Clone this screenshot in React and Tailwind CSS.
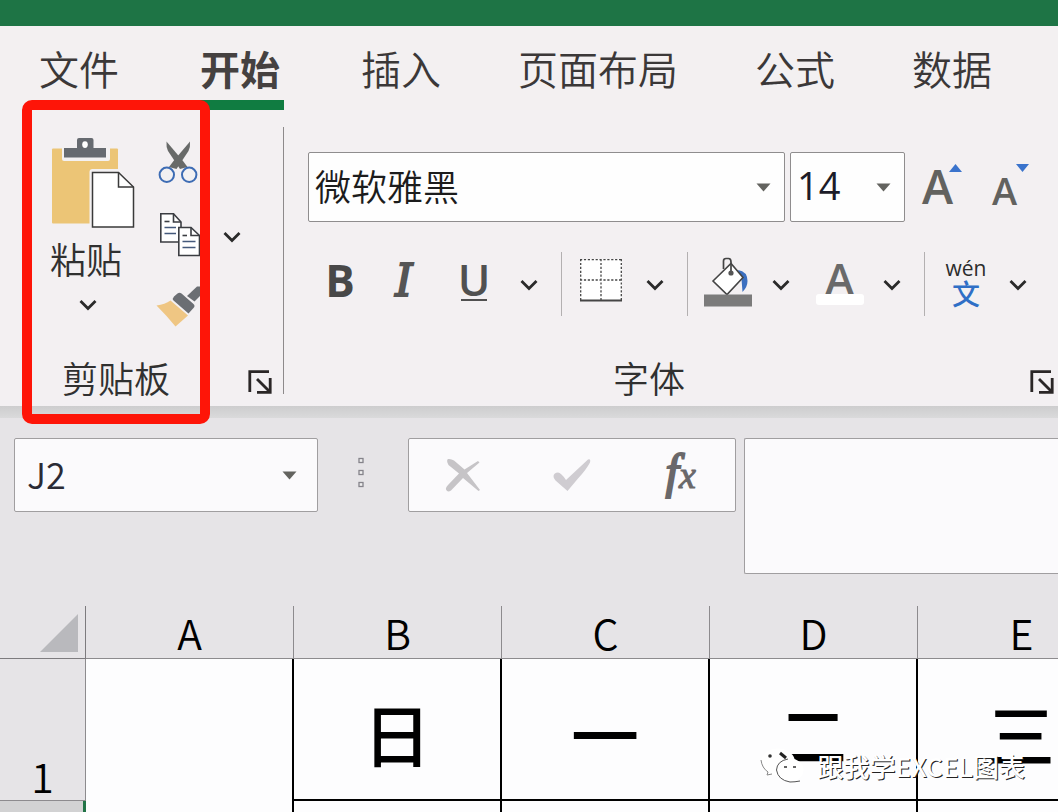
const TABS = ["文件", "开始", "插入", "页面布局", "公式", "数据"];

const COLUMNS = [
  { name: "A", day: "" },
  { name: "B", day: "日" },
  { name: "C", day: "一" },
  { name: "D", day: "二" },
  { name: "E", day: "三" },
];

function Chevron() {
  return (
    <svg width="18" height="12" viewBox="0 0 18 12" fill="none" stroke="#2a2a2a" strokeWidth="2.8" aria-hidden="true">
      <path d="M1.5 2 L9 9.5 L16.5 2" />
    </svg>
  );
}

function ChevronButton({ label }) {
  return (
    <button type="button" aria-label={label} className="flex h-16 w-[34px] items-center justify-center pt-0.5">
      <Chevron />
    </button>
  );
}

function Separator() {
  return (
    <div className="flex h-16 w-[30px] justify-center">
      <div className="w-px bg-[#b3b0b1]" />
    </div>
  );
}

function DropArrow() {
  return (
    <svg width="15" height="9" viewBox="0 0 15 9" aria-hidden="true">
      <path d="M0.5 0.5 H14.5 L7.5 8.5 Z" fill="#63635f" />
    </svg>
  );
}

function Launcher({ label }) {
  return (
    <button type="button" aria-label={label} className="shrink-0">
      <svg width="24" height="24" viewBox="0 0 24 24" fill="none" stroke="#2a2626" strokeWidth="2.8" aria-hidden="true">
        <path d="M1.8 22 V1.6 H21" />
        <path d="M9 9 L21.5 21.5" />
        <path d="M22.2 8 V22.3 H9" />
      </svg>
    </button>
  );
}

function PasteIcon() {
  return (
    <svg width="86" height="92" viewBox="0 0 86 92" aria-hidden="true">
      <rect x="2" y="10.5" width="66" height="75" rx="1" fill="#ecc576" />
      <path d="M12 9 H60 V21 Q60 23 58 23 H14 Q12 23 12 21 Z" fill="#f3f1f2" />
      <path d="M14 10 H27 V2 Q27 0 29 0 H41.5 Q43.5 0 43.5 2 V10 H56 V19.5 H14 Z" fill="#666a70" />
      <ellipse cx="35" cy="6.6" rx="2.8" ry="3.4" fill="#fff" />
      <path d="M39.500 86 V34 Q39.500 31 42.500 31 H72 V86 Z" fill="#f3f1f2" />
      <path d="M42.500 34.500 H68.500 L83.500 49 V89 H42.500 Z" fill="#fff" stroke="#3a3a3a" strokeWidth="1.500" />
      <path d="M68.500 34.500 V49 H83.500" fill="none" stroke="#3a3a3a" strokeWidth="1.500" />
    </svg>
  );
}

function CutIcon() {
  return (
    <svg width="46" height="46" viewBox="0 0 46 46" aria-hidden="true">
      <path d="M10.500 1.500 Q10 7 12 11 L24 29 L31.500 27 L27 21 Z" fill="#686a69" />
      <path d="M34 1.500 Q34.500 7 32.500 11 L20.500 29 L13 27 L17.500 21 Z" fill="#686a69" />
      <circle cx="10.800" cy="34.800" r="7.200" fill="#f3f1f2" stroke="#3d6cb4" strokeWidth="2" />
      <circle cx="33.200" cy="34.800" r="7.200" fill="#f3f1f2" stroke="#3d6cb4" strokeWidth="2" />
    </svg>
  );
}

function CopyIcon() {
  return (
    <svg width="46" height="46" viewBox="0 0 46 46" fill="none" stroke="#3b3d42" strokeWidth="1.600" aria-hidden="true">
      <path d="M4.800 1.800 H17.500 L25 10 V30 H4.800 Z" fill="#fff" />
      <path d="M17.500 1.800 V10 H25" />
      <path d="M8.500 9.500 H13.500" />
      <path d="M8.500 15.500 H20 M8.500 21.500 H20" stroke="#44597b" />
      <path d="M22.800 15.500 H35 L43.500 23.500 V43.500 H22.800 Z" fill="#fff" />
      <path d="M35 15.500 V23.500 H43.500" />
      <path d="M26.500 23.500 H31" />
      <path d="M26.500 29.500 H39.500 M26.500 35.500 H39.500" stroke="#44597b" />
    </svg>
  );
}

function BrushIcon() {
  return (
    <svg width="46" height="46" viewBox="0 0 46 46" aria-hidden="true">
      <path d="M0.500 21.500 Q9 20.500 14.500 16.500 L32 31.500 L19.500 42.500 Q11 32 0.500 21.500 Z" fill="#efc683" />
      <path d="M18 12.500 L21.500 9.500 Q23.500 8 25.500 9.500 L37.500 20 Q39.500 22 37.500 24 L32.500 29.500 L17.500 16.500 Q16 14.500 18 12.500 Z" fill="#6b6e73" />
      <path d="M31 12 L41 2.500 L46 2.500 V10 L38.500 17.500 Z" fill="#6b6e73" />
    </svg>
  );
}

function BorderIcon() {
  return (
    <svg width="44" height="44" viewBox="0 0 44 44" fill="none" stroke="#454545" strokeWidth="1.300" aria-hidden="true">
      <rect x="1" y="1" width="42" height="42" fill="#fff" stroke="none" />
      <path d="M1 1.700 H43 M1 22 H43 M1.700 1 V42 M22 1 V42 M42.300 1 V42" strokeDasharray="2.200 1.700" />
      <path d="M1 42.500 H43" strokeWidth="2" />
    </svg>
  );
}

function FillIcon() {
  return (
    <svg width="48" height="50" viewBox="0 0 48 50" aria-hidden="true">
      <path d="M34 13 Q43.500 14.500 43.500 24 Q43.500 30 38.500 35 L37.500 22 Z" fill="#3b6fc0" />
      <path d="M9 24 L27 6.500 L39 20.500 L23 37.500 Z" fill="#fff" stroke="#444" strokeWidth="1.600" />
      <path d="M19.500 12 V4 Q19.500 1.500 22 1.500 H24.500 Q27 1.500 27 5 V14" fill="none" stroke="#444" strokeWidth="1.700" />
      <circle cx="27" cy="16" r="2.600" fill="#555" />
      <rect x="0" y="37.500" width="48" height="12" fill="#7b7b7b" />
    </svg>
  );
}

function ClipboardGroup() {
  return (
    <section aria-label="剪贴板" className="relative mt-[17px] mb-3 flex w-[284px] shrink-0 flex-col justify-between border-r border-[#8d8a8b]">
      <div className="flex pl-[50px]">
        <button type="button" className="flex w-[86px] flex-col items-start pt-[11px] text-[#303030]">
          <PasteIcon />
          <span className="text-[36px] leading-[56px]">粘贴</span>
          <span className="flex h-[38px] w-[76px] items-center justify-center">
            <Chevron />
          </span>
        </button>
        <div className="ml-5 flex flex-col">
          <button type="button" aria-label="剪切" className="flex h-[72px] items-center">
            <CutIcon />
          </button>
          <button type="button" aria-label="复制" className="flex h-[72px] items-center">
            <CopyIcon />
          </button>
          <button type="button" aria-label="格式刷" className="flex h-[72px] items-center">
            <BrushIcon />
          </button>
        </div>
        <button type="button" aria-label="复制选项" className="flex h-[220px] w-[60px] items-center justify-center">
          <Chevron />
        </button>
      </div>
      <div className="flex items-end justify-between pr-[11px] pl-[62px]">
        <span className="pb-0.5 text-[36px] leading-[30px] text-[#303030]">剪贴板</span>
        <Launcher label="剪贴板设置" />
      </div>
      <div className="pointer-events-none absolute -top-[27px] -bottom-[30px] left-[22px] w-[188px] rounded-[10px] border-10 border-[#fe1508]" />
    </section>
  );
}

function FontGroup() {
  return (
    <section aria-label="字体" className="mt-[42px] mb-3 flex min-w-0 flex-1 flex-col justify-between pl-6">
      <div className="flex flex-col gap-[30px]">
        <div className="flex">
          <div className="relative flex-1">
            <select
              aria-label="字体"
              className="h-[70px] w-full appearance-none rounded-[2px] border border-[#8f8d8e] bg-[#fefefe] pb-1 pl-1.5 text-[36px] text-[#1c1c1c]"
            >
              <option>微软雅黑</option>
            </select>
            <span className="pointer-events-none absolute inset-y-0 right-3.5 flex items-center">
              <DropArrow />
            </span>
          </div>
          <div className="relative ml-[5px] w-[115px]">
            <select
              aria-label="字号"
              className="h-[70px] w-full appearance-none rounded-[2px] border border-[#8f8d8e] bg-[#fefefe] pb-1 pl-1.5 font-['Open_Sans','Noto_Sans',sans-serif] text-[38px] font-normal text-[#1c1c28]"
            >
              <option>14</option>
            </select>
            <span className="pointer-events-none absolute inset-y-0 right-3.5 flex items-center">
              <DropArrow />
            </span>
          </div>
          <button type="button" aria-label="增大字号" className="ml-[17px] flex h-[70px] w-[70px] items-start pt-2.5 font-['Open_Sans',sans-serif] font-semibold text-[#62625f]">
            <span className="text-[47px] leading-[48px]">A</span>
            <svg width="13" height="8" viewBox="0 0 13 8" className="-ml-1 mt-0.5" aria-hidden="true">
              <path d="M6.500 0 L13 8 H0 Z" fill="#3a73cc" />
            </svg>
          </button>
          <button type="button" aria-label="减小字号" className="flex h-[70px] w-[66px] items-start pt-2.5 font-['Open_Sans',sans-serif] font-semibold text-[#62625f]">
            <span className="pt-1 text-[38px] leading-[48px]">A</span>
            <svg width="13" height="8" viewBox="0 0 13 8" className="-ml-px mt-0.5" aria-hidden="true">
              <path d="M0 0 H13 L6.500 8 Z" fill="#3a73cc" />
            </svg>
          </button>
        </div>
        <div className="flex h-16 items-center">
          <button type="button" aria-label="加粗" className="h-16 w-16 pb-2 font-['Open_Sans',sans-serif] text-[44px] leading-none font-bold text-[#484848]">
            B
          </button>
          <button type="button" aria-label="倾斜" className="h-16 w-16 pb-1.5 font-['DejaVu_Serif',serif] text-[44px] leading-none font-normal text-[#555] italic [-webkit-text-stroke:2px_#555]">
            I
          </button>
          <button type="button" aria-label="下划线" className="flex h-16 w-[76px] flex-col items-center justify-center pb-2 font-['Open_Sans',sans-serif] text-[44px] font-semibold text-[#505050]">
            <span className="leading-[40px]">U</span>
            <span className="h-0.5 w-[26px] bg-[#505050]" />
          </button>
          <ChevronButton label="下划线选项" />
          <Separator />
          <button type="button" aria-label="边框" className="flex h-16 w-[62px] items-center justify-center pr-3 pb-2">
            <BorderIcon />
          </button>
          <ChevronButton label="边框选项" />
          <Separator />
          <button type="button" aria-label="填充颜色" className="flex h-16 w-[62px] items-center justify-center pr-2.5 pb-1">
            <FillIcon />
          </button>
          <ChevronButton label="填充颜色选项" />
          <button type="button" aria-label="字体颜色" className="flex h-16 w-[77px] flex-col items-center pl-1.5 font-['Open_Sans',sans-serif] text-[44px] font-semibold text-[#6a6a6a]">
            <span className="h-[42px] leading-[52px]">A</span>
            <span className="h-[11px] w-12 rounded-[3px] bg-white" />
          </button>
          <ChevronButton label="字体颜色选项" />
          <Separator />
          <button type="button" aria-label="拼音指南" className="flex h-16 w-[62px] flex-col items-center pr-2">
            <span className="font-['Open_Sans',sans-serif] text-[21px] leading-[32px] font-normal text-[#2c2c2c]">wén</span>
            <span className="text-[28px] leading-[18px] font-medium text-[#2f6fc6]">文</span>
          </button>
          <ChevronButton label="拼音指南选项" />
        </div>
      </div>
      <div className="flex items-end pr-1">
        <span className="flex-1 pr-10 pb-0.5 text-center text-[36px] leading-[30px] text-[#303030]">字体</span>
        <Launcher label="字体设置" />
      </div>
    </section>
  );
}

function FormulaBar() {
  return (
    <div className="flex shrink-0 items-start pt-5 pb-8 pl-3.5">
      <div className="relative w-[304px] shrink-0">
        <input
          aria-label="名称框"
          defaultValue="J2"
          className="h-[74px] w-full rounded-[2px] border border-[#a09ea0] bg-[#fbfafc] pb-1 pl-3 text-[36px] text-[#2b2b35] outline-none"
        />
        <span className="pointer-events-none absolute inset-y-0 right-[21px] flex items-center">
          <DropArrow />
        </span>
      </div>
      <svg className="mt-[19px] ml-10" width="6" height="32" viewBox="0 0 6 32" fill="#eee" stroke="#85838a" strokeWidth="1.300" aria-hidden="true">
        <rect x="1" y="1.500" width="4" height="4" />
        <rect x="1" y="13.500" width="4" height="4" />
        <rect x="1" y="25.500" width="4" height="4" />
      </svg>
      <div className="ml-11 grid h-[74px] w-[328px] shrink-0 grid-cols-3 items-center justify-items-center rounded-[2px] border border-[#a09ea0] bg-[#fbfafc]">
        <button type="button" aria-label="取消">
          <svg width="36" height="34" viewBox="0 0 36 34" aria-hidden="true">
            <path d="M3 1 Q6 0.500 9 2.500 L19.500 11.500 L33 3 L34.500 4.500 L22 15 L35 32 L33.500 33 L18 20 L6 32.500 Q2.500 35 1 31.500 Q0.500 29.500 3 27 L14 15.500 L3.500 7 Q1 2.500 3 1 Z" fill="#c6c4c7" />
          </svg>
        </button>
        <button type="button" aria-label="输入">
          <svg width="40" height="34" viewBox="0 0 40 34" aria-hidden="true">
            <path d="M1.500 18 Q2 14.500 6 14.500 Q9 14.500 14 22 L36 1.500 Q39 0.500 38 4.500 Q34 12 26 20.500 L15.500 33 L3.500 22.500 Q1.200 20 1.500 18 Z" fill="#cfccd1" />
          </svg>
        </button>
        <button type="button" aria-label="插入函数" className="flex items-baseline pb-1 font-['Liberation_Serif',serif] leading-[56px] font-normal text-[#6a686a] italic [-webkit-text-stroke:2px_#6a686a]">
          <span className="text-[48px]">f</span>
          <span className="text-[38px] [-webkit-text-stroke:1px_#6a686a]">x</span>
        </button>
      </div>
      <textarea
        aria-label="编辑栏"
        className="ml-2 block h-[136px] min-w-0 flex-1 resize-none rounded-l-[2px] border border-r-0 border-[#a09ea0] bg-[#fbfafc] p-3 text-[36px] outline-none"
      />
    </div>
  );
}

function Sheet() {
  return (
    <div className="relative min-h-0 flex-1">
      <table className="w-[1126px] table-fixed border-separate border-spacing-0 text-black">
        <thead>
          <tr className="h-[53px]">
            <th aria-label="全选" className="w-[86px] border-r border-b border-[#7d7b7e] p-0">
              <svg className="mt-0.5 ml-10" width="38" height="38" viewBox="0 0 38 38" aria-hidden="true">
                <path d="M38 0 V38 H0 Z" fill="#b9b9bd" />
              </svg>
            </th>
            {COLUMNS.map((column) => (
              <th key={column.name} scope="col" className="border-r border-b border-[#8d8b8e] p-0 text-[41px] leading-[44px] font-[350]">
                {column.name}
              </th>
            ))}
          </tr>
        </thead>
        <tbody>
          <tr className="h-[142px]">
            <th scope="row" className="border-r border-b border-[#8d8b8e] p-0 pb-0.5 text-center align-bottom text-[41px] leading-[46px] font-[350]">
              1
            </th>
            {COLUMNS.map((column) =>
              column.day ? (
                <td key={column.name} className="border-r-2 border-b-2 border-black bg-[#fdfdfe] p-0 pt-2 text-center text-[68px] leading-[80px] font-medium">
                  {column.day}
                </td>
              ) : (
                <td key={column.name} className="border-r-2 border-black bg-[#fdfdfe] p-0" />
              )
            )}
          </tr>
          <tr className="h-[142px]">
            <th aria-label="第 2 行" className="border-r-3 border-[#217346] bg-[#d2d2d3]" />
            {COLUMNS.map((column) => (
              <td key={column.name} className="border-r-2 border-black bg-[#fdfdfe]" />
            ))}
          </tr>
        </tbody>
      </table>
      <div className="absolute right-[33px] bottom-7 flex items-center gap-2.5">
        <svg width="48" height="36" viewBox="0 0 48 36" aria-hidden="true">
          <ellipse cx="18" cy="14" rx="17" ry="13.500" fill="#fff" />
          <path d="M1 12 Q2 20 8 24 L7 27 L12 26" fill="none" stroke="#888" strokeWidth="1" />
          <circle cx="10" cy="8" r="1.800" fill="#333" />
          <path d="M20 5 L26 10" stroke="#222" strokeWidth="3" />
          <ellipse cx="30" cy="22" rx="13.500" ry="11.500" fill="#fff" />
          <path d="M28 11 Q17 13 16.500 22 Q18 32 30 34 Q35 34 40 33" fill="none" stroke="#555" strokeWidth="1" />
          <path d="M24 19 H27 M33 19 H36" stroke="#333" strokeWidth="1.600" />
        </svg>
        <span className="text-[26px] leading-[36px] font-medium whitespace-nowrap text-white [text-shadow:1px_1px_0_#222]">
          跟我学EXCEL图表
        </span>
      </div>
    </div>
  );
}

export default function App() {
  return (
    <div className="flex h-screen flex-col overflow-hidden bg-[#e6e4e7] font-['Noto_Sans_CJK_SC',sans-serif] font-[350]">
      <header className="h-[26px] shrink-0 bg-[#1e7445]" />
      <nav aria-label="功能区选项卡" className="flex shrink-0 gap-[77px] bg-[#f3f0f1] pl-[39px] text-[40px] whitespace-nowrap text-[#3b3838]">
        {TABS.map((tab) =>
          tab === "开始" ? (
            <button key={tab} type="button" aria-current="page" className="h-[84px] border-b-10 border-[#107c41] px-1 pt-2.5 leading-[58px] font-bold text-[#454140]">
              {tab}
            </button>
          ) : (
            <button key={tab} type="button" className="h-[84px] border-b-10 border-transparent pt-2.5 leading-[58px]">
              {tab}
            </button>
          )
        )}
      </nav>
      <div className="flex h-[296px] shrink-0 bg-[#f3f0f2]">
        <ClipboardGroup />
        <FontGroup />
      </div>
      <div className="h-3 shrink-0 bg-linear-to-b from-[#cdcdce] to-[#dadadb]" />
      <FormulaBar />
      <Sheet />
    </div>
  );
}
